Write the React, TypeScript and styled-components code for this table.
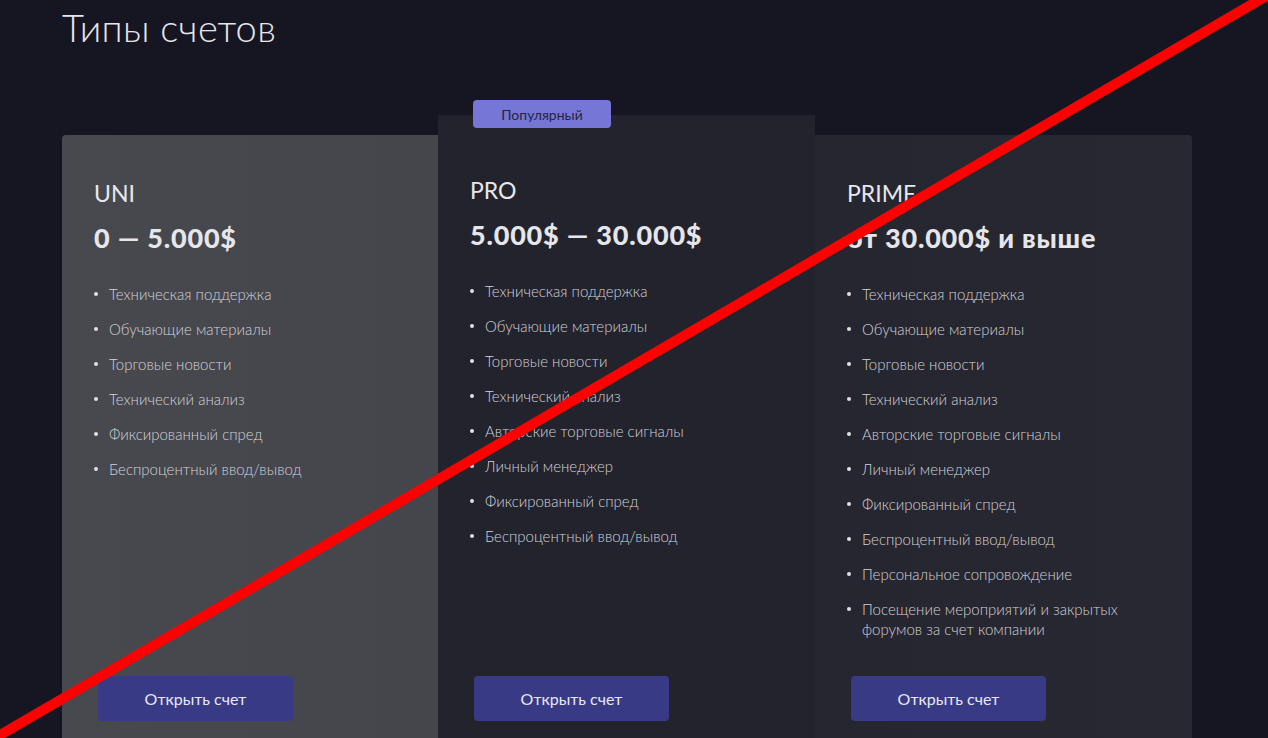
import React from "react";
import styled, { createGlobalStyle } from "styled-components";

const Global = createGlobalStyle`
  html, body { margin: 0; padding: 0; background: #161622; overflow: hidden; }
  body { font-family: Lato, "Noto Sans", sans-serif; color: #e4e4e8; }
  * { box-sizing: border-box; }
`;

const Page = styled.div`
  position: relative;
  width: 1268px;
  height: 738px;
  overflow: hidden;
  padding: 4px 76px 0 62px;
`;

const Title = styled.h1`
  margin: 0;
  font-size: 38px;
  line-height: 46px;
  font-weight: 300;
  color: #e6e6ea;
  letter-spacing: 0.3px;
`;

const Row = styled.div`
  display: grid;
  grid-template-columns: 376px 377px 377px;
  margin-top: 85px;
  align-items: stretch;
`;

type CardProps = { $variant: "uni" | "pro" | "prime" };

const Card = styled.div<CardProps>`
  position: relative;
  display: flex;
  flex-direction: column;
  min-height: 670px;
  padding: ${(p) => (p.$variant === "pro" ? "60px 32px 0" : "43px 32px 0")};
  margin-top: ${(p) => (p.$variant === "pro" ? "-20px" : "0")};
  background: ${(p) =>
    p.$variant === "uni"
      ? "linear-gradient(90deg, #48484f 0%, #45454c 100%)"
      : p.$variant === "pro"
      ? "#23232e"
      : "linear-gradient(90deg, #262630 0%, #282832 100%)"};
  border-radius: ${(p) =>
    p.$variant === "uni" ? "4px 0 0 0" : p.$variant === "prime" ? "0 4px 0 0" : "0"};
`;

const Badge = styled.div`
  position: absolute;
  top: -15px;
  left: 35px;
  width: 138px;
  height: 28px;
  border-radius: 4px;
  background: #7676d6;
  color: #25253a;
  font-size: 14px;
  display: flex;
  align-items: center;
  justify-content: center;
`;

const Name = styled.div`
  font-size: 23px;
  line-height: 30px;
  font-weight: 400;
  color: #e8e8ec;
`;

const Price = styled.div`
  margin-top: 15px;
  font-size: 27px;
  line-height: 30px;
  font-weight: 900;
  letter-spacing: 0.8px;
  color: #e6e6ea;
`;

const List = styled.ul`
  list-style: none;
  margin: 31px 0 0;
  padding: 0;
  display: flex;
  flex-direction: column;
  gap: 15px;
`;

const Item = styled.li`
  position: relative;
  padding-left: 15px;
  font-size: 15px;
  line-height: 20px;
  font-weight: 300;
  color: #d2d2d7;
  &::before {
    content: "";
    position: absolute;
    left: 0;
    top: 8px;
    width: 4px;
    height: 4px;
    border-radius: 50%;
    background: #e0e0e4;
  }
`;

const Button = styled.button`
  margin: auto 0 0 4px;
  width: 195px;
  height: 45px;
  border: none;
  border-radius: 4px;
  background: #393a85;
  color: #e8e8f0;
  font-family: Lato, "Noto Sans", sans-serif;
  font-size: 16px;
  cursor: pointer;
`;

const Spacer = styled.div`
  height: 84px;
  flex-shrink: 0;
`;

const Overlay = styled.svg`
  position: absolute;
  left: 0;
  top: 0;
  pointer-events: none;
`;

const plans = [
  {
    variant: "uni" as const,
    name: "UNI",
    price: "0 — 5.000$",
    items: [
      "Техническая поддержка",
      "Обучающие материалы",
      "Торговые новости",
      "Технический анализ",
      "Фиксированный спред",
      "Беспроцентный ввод/вывод",
    ],
  },
  {
    variant: "pro" as const,
    name: "PRO",
    price: "5.000$ — 30.000$",
    items: [
      "Техническая поддержка",
      "Обучающие материалы",
      "Торговые новости",
      "Технический анализ",
      "Авторские торговые сигналы",
      "Личный менеджер",
      "Фиксированный спред",
      "Беспроцентный ввод/вывод",
    ],
  },
  {
    variant: "prime" as const,
    name: "PRIME",
    price: "от 30.000$ и выше",
    items: [
      "Техническая поддержка",
      "Обучающие материалы",
      "Торговые новости",
      "Технический анализ",
      "Авторские торговые сигналы",
      "Личный менеджер",
      "Фиксированный спред",
      "Беспроцентный ввод/вывод",
      "Персональное сопровождение",
      "Посещение мероприятий и закрытых форумов за счет компании",
    ],
  },
];

export default function App() {
  return (
    <>
      <Global />
      <Page>
        <Title>Типы счетов</Title>
        <Row>
          {plans.map((p) => (
            <Card key={p.name} $variant={p.variant}>
              {p.variant === "pro" && <Badge>Популярный</Badge>}
              <Name>{p.name}</Name>
              <Price>{p.price}</Price>
              <List>
                {p.items.map((it) => (
                  <Item key={it}>{it}</Item>
                ))}
              </List>
              <Button>Открыть счет</Button>
              <Spacer />
            </Card>
          ))}
        </Row>
        <Overlay width="1268" height="738" viewBox="0 0 1268 738">
          <line x1="-10" y1="741" x2="1278" y2="-11" stroke="#ff0000" strokeWidth="10" />
        </Overlay>
      </Page>
    </>
  );
}
